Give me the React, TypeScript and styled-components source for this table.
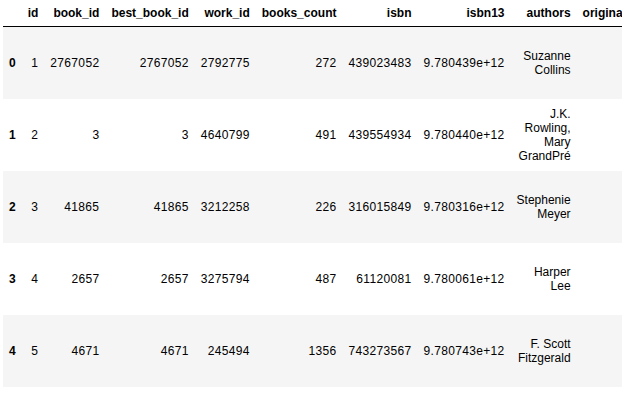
import * as React from 'react';
import styled, { createGlobalStyle } from 'styled-components';

interface Book {
    id: number;
    bookId: number;
    bestBookId: number;
    workId: number;
    booksCount: number;
    isbn: number;
    isbn13: string;
    authors: string;
}

const columns = [
    'id',
    'book_id',
    'best_book_id',
    'work_id',
    'books_count',
    'isbn',
    'isbn13',
    'authors',
    'original_title',
];

const books: Book[] = [
    { id: 1, bookId: 2767052, bestBookId: 2767052, workId: 2792775, booksCount: 272, isbn: 439023483, isbn13: '9.780439e+12', authors: 'Suzanne Collins' },
    { id: 2, bookId: 3, bestBookId: 3, workId: 4640799, booksCount: 491, isbn: 439554934, isbn13: '9.780440e+12', authors: 'J.K. Rowling, Mary GrandPré' },
    { id: 3, bookId: 41865, bestBookId: 41865, workId: 3212258, booksCount: 226, isbn: 316015849, isbn13: '9.780316e+12', authors: 'Stephenie Meyer' },
    { id: 4, bookId: 2657, bestBookId: 2657, workId: 3275794, booksCount: 487, isbn: 61120081, isbn13: '9.780061e+12', authors: 'Harper Lee' },
    { id: 5, bookId: 4671, bestBookId: 4671, workId: 245494, booksCount: 1356, isbn: 743273567, isbn13: '9.780743e+12', authors: 'F. Scott Fitzgerald' },
];

const GlobalStyle = createGlobalStyle`
    body {
        margin: 0;
        background: #ffffff;
        font-family: "Liberation Sans", Arial, Helvetica, sans-serif;
    }
`;

const Output = styled.div`
    width: 619px;
    margin-left: 3px;
    overflow: hidden;
`;

const Table = styled.table`
    width: 1px;
    border: none;
    border-collapse: collapse;
    border-spacing: 0;
    color: #000000;
    font-size: 12px;
    & thead {
        border-bottom: 1px solid #000000;
        vertical-align: bottom;
    }
    & tbody tr {
        height: 72px;
    }
    & tbody tr:nth-child(odd) {
        background: #f5f5f5;
    }
`;

const HeadCell = styled.th`
    padding: 6px;
    text-align: right;
    vertical-align: middle;
    line-height: normal;
    font-weight: bold;
    white-space: nowrap;
`;

const IndexCell = styled.th`
    padding: 6px;
    text-align: right;
    vertical-align: middle;
    line-height: normal;
    font-weight: bold;
`;

const Cell = styled.td<{ $wrap?: boolean }>`
    padding: 6px;
    text-align: right;
    vertical-align: middle;
    line-height: normal;
    white-space: ${props => (props.$wrap ? 'normal' : 'nowrap')};
    letter-spacing: ${props => (props.$wrap ? '0' : '0.33px')};
`;

const TitleCell = styled.td`
    padding: 6px;
`;

export default function App() {
    return (
        <>
            <GlobalStyle />
            <Output>
                <Table>
                    <thead>
                        <tr>
                            <HeadCell />
                            {columns.map(c => <HeadCell key={c}>{c}</HeadCell>)}
                        </tr>
                    </thead>
                    <tbody>
                        {books.map((b, i) => (
                            <tr key={b.id}>
                                <IndexCell>{i}</IndexCell>
                                <Cell>{b.id}</Cell>
                                <Cell>{b.bookId}</Cell>
                                <Cell>{b.bestBookId}</Cell>
                                <Cell>{b.workId}</Cell>
                                <Cell>{b.booksCount}</Cell>
                                <Cell>{b.isbn}</Cell>
                                <Cell>{b.isbn13}</Cell>
                                <Cell $wrap>{b.authors}</Cell>
                                <TitleCell />
                            </tr>
                        ))}
                    </tbody>
                </Table>
            </Output>
        </>
    );
}
